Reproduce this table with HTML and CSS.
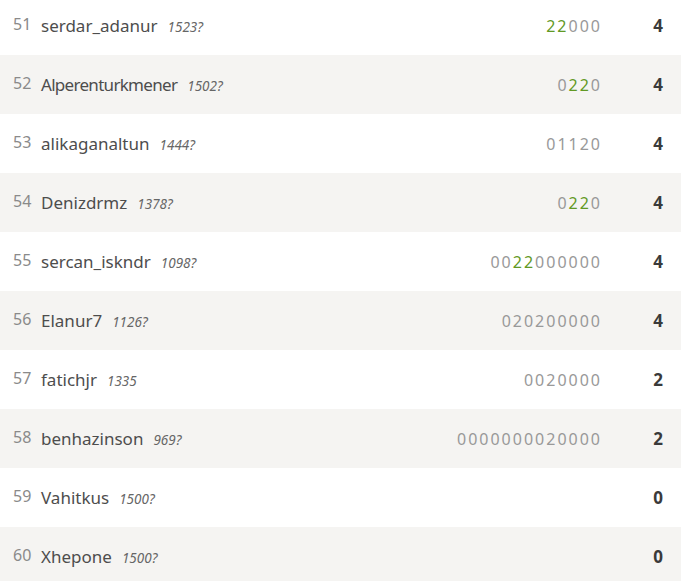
FILE: index.html
```html
<!DOCTYPE html>
<html>
<head>
<meta charset="utf-8">
<link rel="stylesheet" href="styles.css">
</head>
<body>
<table class="standing">
<tbody>
<tr class="r-odd"><td class="rank">51</td><td class="player"><span class="name">serdar_adanur</span><em class="rating">1523?</em></td><td class="sheet"><span class="dbl">22</span>000</td><td class="total">4</td></tr>
<tr class="r-even"><td class="rank">52</td><td class="player"><span class="name narrow">Alperenturkmener</span><em class="rating">1502?</em></td><td class="sheet">0<span class="dbl">22</span>0</td><td class="total">4</td></tr>
<tr class="r-odd"><td class="rank">53</td><td class="player"><span class="name">alikaganaltun</span><em class="rating">1444?</em></td><td class="sheet">01120</td><td class="total">4</td></tr>
<tr class="r-even"><td class="rank">54</td><td class="player"><span class="name">Denizdrmz</span><em class="rating">1378?</em></td><td class="sheet">0<span class="dbl">22</span>0</td><td class="total">4</td></tr>
<tr class="r-odd"><td class="rank">55</td><td class="player"><span class="name">sercan_iskndr</span><em class="rating">1098?</em></td><td class="sheet">00<span class="dbl">22</span>000000</td><td class="total">4</td></tr>
<tr class="r-even"><td class="rank">56</td><td class="player"><span class="name">Elanur7</span><em class="rating">1126?</em></td><td class="sheet">020200000</td><td class="total">4</td></tr>
<tr class="r-odd"><td class="rank">57</td><td class="player"><span class="name">fatichjr</span><em class="rating">1335</em></td><td class="sheet">0020000</td><td class="total">2</td></tr>
<tr class="r-even"><td class="rank">58</td><td class="player"><span class="name">benhazinson</span><em class="rating">969?</em></td><td class="sheet">0000000020000</td><td class="total">2</td></tr>
<tr class="r-odd"><td class="rank">59</td><td class="player"><span class="name">Vahitkus</span><em class="rating">1500?</em></td><td class="sheet"></td><td class="total">0</td></tr>
<tr class="r-even"><td class="rank">60</td><td class="player"><span class="name">Xhepone</span><em class="rating">1500?</em></td><td class="sheet"></td><td class="total">0</td></tr>
</tbody>
</table>
</body>
</html>
```
FILE: styles.css
```css
html, body {
  margin: 0;
  padding: 0;
  background: #fff;
}
body {
  font-family: "Noto Sans", "Open Sans", "Liberation Sans", sans-serif;
  overflow: hidden;
}
.standing {
  width: 100%;
  border-collapse: collapse;
  margin-top: -4px;
}
.standing tr {
  height: 59px;
}
.r-even {
  background: #f5f4f2;
}
.standing td {
  padding: 0;
  vertical-align: middle;
  white-space: nowrap;
}
.rank {
  width: 28px;
  padding-left: 13px !important;
  font-size: 16px;
  color: #8a8a8a;
  line-height: 1;
  padding-bottom: 4px !important;
}
.name {
  color: #4d4d4d;
  font-size: 17px;
}
.name.narrow {
  letter-spacing: -0.7px;
}
.rating {
  font-size: 13.5px;
  color: #666;
  margin-left: 10px;
  font-style: italic;
}
.sheet {
  text-align: right;
  font-size: 16px;
  letter-spacing: 2px;
  color: #999;
}
.dbl {
  color: #629924;
}
.total {
  width: 61px;
  text-align: right;
  padding-right: 18px !important;
  font-weight: bold;
  font-size: 17px;
  color: #3a3a3a;
}
```
